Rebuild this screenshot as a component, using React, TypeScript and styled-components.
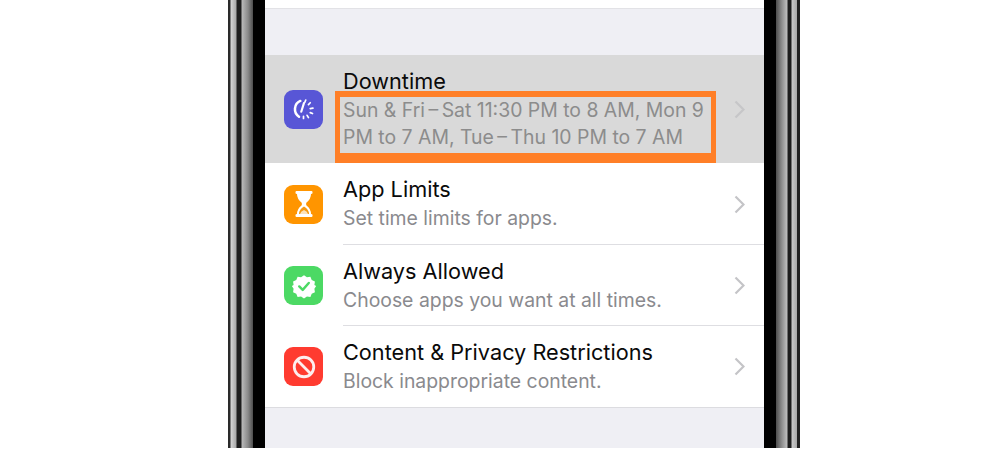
import styled, { createGlobalStyle } from "styled-components";
import { ReactNode } from "react";

const GlobalStyle = createGlobalStyle`
  html, body {
    margin: 0;
    padding: 0;
    background: #fff;
  }
  body {
    font-family: Inter, "Liberation Sans", sans-serif;
  }
`;

const Page = styled.div`
  width: 1000px;
  height: 451px;
  background: #fff;
  overflow: hidden;
  padding-left: 228px;
  box-sizing: border-box;
`;

const Phone = styled.div`
  width: 572px;
  height: 448px;
  display: flex;
`;

const LeftBezel = styled.div`
  width: 37px;
  background: linear-gradient(
    to right,
    #2a2a2a 0,
    #2a2a2a 2px,
    #d4d4d4 3px,
    #a8a8a8 8px,
    #1d1d1d 9px,
    #1d1d1d 13px,
    #b9b9b9 14px,
    #8a8a8a 20px,
    #4d4d4d 25px,
    #000 25px,
    #000 37px
  );
`;

const RightBezel = styled.div`
  width: 36px;
  background: linear-gradient(
    to right,
    #000 0,
    #000 12px,
    #4d4d4d 12px,
    #8f8f8f 18px,
    #bdbdbd 23px,
    #1d1d1d 24px,
    #1d1d1d 27px,
    #c9c9c9 28px,
    #a8a8a8 33px,
    #222 33px,
    #222 36px
  );
`;

const Screen = styled.div`
  flex: 1;
  display: flex;
  flex-direction: column;
  background: #efeff4;
`;

const TopRow = styled.div`
  height: 8px;
  background: #fff;
  border-bottom: 1px solid #e2e2e6;
`;

const Spacer = styled.div`
  height: 46px;
`;

const List = styled.div`
  display: flex;
  flex-direction: column;
  border-bottom: 1px solid #dcdce0;
  background: #fff;
`;

const Row = styled.div<{ $selected?: boolean; $height: number }>`
  position: relative;
  display: flex;
  align-items: center;
  height: ${(p) => p.$height}px;
  padding-left: 19px;
  background: ${(p) => (p.$selected ? "#d9d9d9" : "#fff")};
`;

const IconBox = styled.div<{ $color: string }>`
  width: 39px;
  height: 39px;
  flex: none;
  border-radius: 9px;
  background: ${(p) => p.$color};
  display: flex;
  align-items: center;
  justify-content: center;
`;

const RowBody = styled.div<{ $line?: boolean }>`
  flex: 1;
  align-self: stretch;
  margin-left: 20px;
  padding-right: 19px;
  display: flex;
  align-items: center;
  box-shadow: ${(p) => (p.$line ? "inset 0 -1px 0 #dedee2" : "none")};
`;

const Texts = styled.div`
  flex: 1;
  min-width: 0;
`;

const Title = styled.div`
  font-size: 21.7px;
  line-height: 27px;
  margin-bottom: 2px;
  color: #0a0a0a;
`;

const Sub = styled.div<{ $selected?: boolean }>`
  font-size: 19.4px;
  line-height: 27px;
  color: ${(p) => (p.$selected ? "#8c8c8c" : "#8a8a8e")};
  width: 372px;
`;

const Chevron = styled.svg`
  width: 11px;
  height: 19px;
  flex: none;
`;

const Highlight = styled.div`
  position: absolute;
  left: 70px;
  top: 36px;
  width: 381px;
  height: 72px;
  box-sizing: border-box;
  border: solid #ff7f27;
  border-width: 6px 5px 10px 5px;
  pointer-events: none;
`;

const Bottom = styled.div`
  flex: 1;
`;

const ClockIcon = () => (
  <svg width="27" height="27" viewBox="0 0 30 30" fill="none" stroke="#fff" strokeLinecap="round">
    <path d="M11.5 5.5 A10 10 0 0 0 10 23" strokeWidth="2.8" />
    <path d="M15.5 8 L12.5 17.5" strokeWidth="2.4" />
    <path d="M17.5 4.5 L16.5 7 M22.5 7.5 L20.5 9.5 M25.5 13.5 L22.5 14 M25 19.5 L22.5 18.5 M20.5 24 L19 21.5 M15 25 L15 22.5" strokeWidth="1.9" />
  </svg>
);

const HourglassIcon = () => (
  <svg width="28" height="30" viewBox="0 0 28 30" fill="#fff">
    <path d="M6.5 2 H21.5 Q22.5 2 22.5 3.2 V4 Q22.5 5 21 5 Q21 10 16.5 13.5 Q15.5 15 16.5 16.5 Q21 20 21 25 Q22.5 25 22.5 26 V26.8 Q22.5 28 21.5 28 H6.5 Q5.5 28 5.5 26.8 V26 Q5.5 25 7 25 Q7 20 11.5 16.5 Q12.5 15 11.5 13.5 Q7 10 7 5 Q5.5 5 5.5 4 V3.2 Q5.5 2 6.5 2 Z" />
    <path d="M14 17.5 Q9.2 20 9 25 H19 Q18.8 20 14 17.5 Z" fill="#f59a14" />
    <path d="M14 21 Q10.5 22.5 10 25 H18 Q17.5 22.5 14 21 Z" fill="#fce3bd" />
  </svg>
);

const BadgeIcon = () => (
  <svg width="26" height="26" viewBox="0 0 30 30">
    <path
      fill="#fff"
      d="M15 2.5 L18.4 5 L22.4 4.4 L23.9 8.2 L27.6 9.8 L27 13.8 L29 15 L27 18.2 L27.6 22.2 L23.9 23.8 L22.4 27.6 L18.4 27 L15 29.5 L11.6 27 L7.6 27.6 L6.1 23.8 L2.4 22.2 L3 18.2 L1 15 L3 13.8 L2.4 9.8 L6.1 8.2 L7.6 4.4 L11.6 5 Z"
    />
    <path d="M9.5 15.5 L13.5 19.5 L20.5 11.5" fill="none" stroke="#4cd964" strokeWidth="2.8" strokeLinecap="round" strokeLinejoin="round" />
  </svg>
);

const NoIcon = () => (
  <svg width="26" height="26" viewBox="0 0 28 28" fill="none" stroke="#fdeeee" strokeWidth="3">
    <circle cx="14" cy="14" r="10.5" />
    <path d="M6.8 6.8 L21.2 21.2" />
  </svg>
);

type Item = {
  color: string;
  icon: ReactNode;
  title: string;
  sub: ReactNode;
  height: number;
  selected?: boolean;
  chevron: string;
  line?: boolean;
};

const items: Item[] = [
  {
    color: "#5856d6",
    icon: <ClockIcon />,
    title: "Downtime",
    sub: "Sun & Fri\u2009–\u2009Sat 11:30 PM to 8 AM, Mon 9 PM to 7 AM, Tue\u2009–\u2009Thu 10 PM to 7 AM",
    height: 108,
    selected: true,
    chevron: "#c6c6c8",
  },
  {
    color: "#ff9500",
    icon: <HourglassIcon />,
    title: "App Limits",
    sub: "Set time limits for apps.",
    height: 82,
    chevron: "#c4c4c7",
    line: true,
  },
  {
    color: "#4cd964",
    icon: <BadgeIcon />,
    title: "Always Allowed",
    sub: "Choose apps you want at all times.",
    height: 81,
    chevron: "#c4c4c7",
    line: true,
  },
  {
    color: "#ff3b30",
    icon: <NoIcon />,
    title: "Content & Privacy Restrictions",
    sub: "Block inappropriate content.",
    height: 81,
    chevron: "#c4c4c7",
  },
];

export default function App() {
  return (
    <Page>
      <GlobalStyle />
      <Phone>
        <LeftBezel />
        <Screen>
          <TopRow />
          <Spacer />
          <List>
            {items.map((item) => (
              <Row key={item.title} $selected={item.selected} $height={item.height}>
                <IconBox $color={item.color}>{item.icon}</IconBox>
                <RowBody $line={item.line}>
                  <Texts>
                    <Title>{item.title}</Title>
                    <Sub $selected={item.selected}>{item.sub}</Sub>
                  </Texts>
                  <Chevron viewBox="0 0 11 19" fill="none" stroke={item.chevron} strokeWidth="2.2">
                    <path d="M1.5 1.5 L9.5 9.5 L1.5 17.5" />
                  </Chevron>
                </RowBody>
                {item.selected && <Highlight />}
              </Row>
            ))}
          </List>
          <Bottom />
        </Screen>
        <RightBezel />
      </Phone>
    </Page>
  );
}
